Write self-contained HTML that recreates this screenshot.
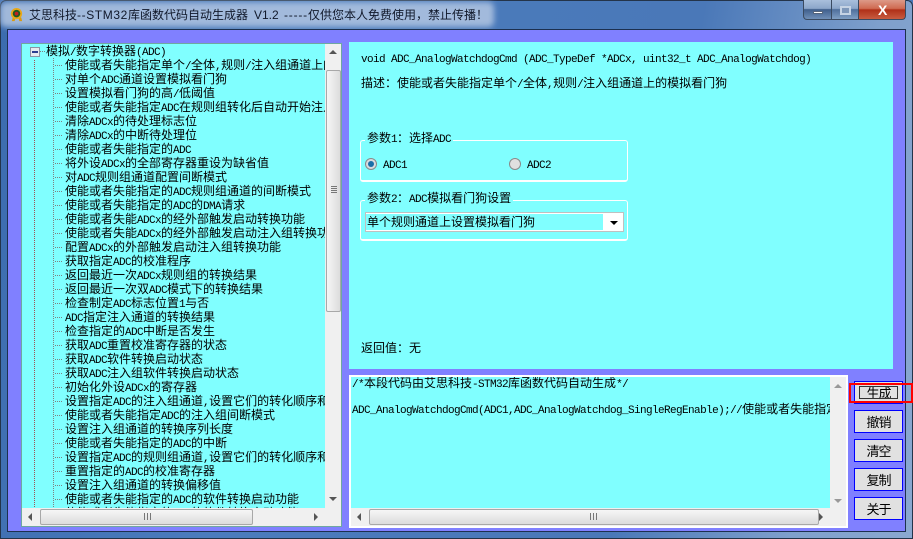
<!DOCTYPE html>
<html><head><meta charset="utf-8">
<style>
html,body{margin:0;padding:0;width:913px;height:539px;overflow:hidden;background:#4a78b8}
*{box-sizing:border-box}
div{position:absolute}
u{text-decoration:none;font-family:"Liberation Mono",monospace;font-size:11px;letter-spacing:-.6px}
body{font-family:"WenQuanYi Zen Hei","Noto Sans CJK SC",sans-serif;font-size:12px;color:#000;line-height:14px}
#frame{left:0;top:0;width:913px;height:539px;background:linear-gradient(100deg,#3c6cae 0%,#4b7cbd 30%,#4a78b8 70%,#7fa0cc 88%,#8aa8d0 100%);border:1px solid #24344a;border-radius:6px 6px 0 0}
#glow{left:0;top:2px;width:494px;height:25px;background:rgba(178,198,226,.85);filter:blur(3px);border-radius:6px}
.t{top:7px;font-size:12px;white-space:nowrap;color:#10182a;line-height:16px}
.tl{font-family:"Liberation Sans",sans-serif}
#client{left:7px;top:29px;width:899px;height:503px;background:#8080ff;border:1px solid #1c3050}
.row{left:43px;white-space:nowrap;height:14px;font-size:12px;line-height:14px}
#tree{left:21px;top:43px;width:321px;height:484px;background:#80ffff;border:1px solid #6fa8a0;overflow:hidden}
#treeclip{left:0;top:0;width:303px;height:464px;overflow:hidden}
.sb{background:#f0f0f0}
.thumb{background:linear-gradient(#f6f6f6,#dcdcdc);border:1px solid #a8a8a8;border-radius:2px}
.tv{background:linear-gradient(90deg,#f6f6f6,#dcdcdc);border:1px solid #a8a8a8;border-radius:2px}
.ar{width:0;height:0}
.btn{left:854px;width:49px;height:23px;background:#e1e1e1;border:1px solid #0000ff;text-align:center;font-size:13px;letter-spacing:-1px;line-height:21px}
.gb{border:1px solid #fff;border-bottom-width:2px;border-radius:3px}
.lg{background:#80ffff;padding:0 2px;white-space:nowrap;font-size:12px;line-height:14px}
</style></head><body>
<div id="frame"></div>
<div id="glow"></div>
<svg style="position:absolute;left:9px;top:7px" width="15" height="15" viewBox="0 0 16 16"><path d="M4 11l-1 4h3l1-3zM10 11l1 4h3l-1-4z" fill="#d99a10"/><circle cx="8" cy="7" r="6" fill="#e8a818"/><circle cx="8" cy="7" r="4" fill="#1f5a1f"/><circle cx="8" cy="7" r="2" fill="#c02020"/></svg>
<div class="t" style="left:29px">艾思科技</div>
<div class="t tl" style="left:77px;letter-spacing:.6px">--STM32</div>
<div class="t" style="left:128px">库函数代码自动生成器</div>
<div class="t tl" style="left:254px">V1.2</div>
<div class="t tl" style="left:284px;letter-spacing:.8px">-----</div>
<div class="t" style="left:308px">仅供您本人免费使用，禁止传播！</div>
<!-- window buttons -->
<div style="left:803px;top:0;width:29px;height:20px;background:linear-gradient(#a9bfdc 0%,#8ba6c9 45%,#3f5f8c 50%,#6f8fb8 100%);border:1px solid #3a4a60;border-top:0;border-radius:0 0 0 4px"></div>
<div style="left:813px;top:11px;width:10px;height:3px;background:#fff;border:1px solid #55657c"></div>
<div style="left:832px;top:0;width:26px;height:20px;background:linear-gradient(#a9bfdc 0%,#8ba6c9 45%,#4f6f9c 50%,#7f9fc4 100%);border-bottom:1px solid #3a4a60"></div>
<div style="left:840px;top:6px;width:11px;height:9px;border:2px solid #c5d3e4;background:#7e98ba"></div>
<div style="left:858px;top:0;width:48px;height:20px;background:linear-gradient(#dd9a88 0%,#cf6a50 45%,#b03018 52%,#c85c40 100%);border:1px solid #3a4a60;border-top:0;border-radius:0 0 4px 0"></div>
<div style="left:878px;top:3px;font:bold 14px/14px 'Liberation Sans',sans-serif;color:#fff">X</div>

<div id="client"></div>

<!-- tree -->
<div id="tree">
 <div id="treeclip">
  <svg style="position:absolute;left:0;top:0" width="60" height="464">
   <path d="M12.5 16V464" stroke="#a05050" stroke-width="1" stroke-dasharray="1 1" fill="none"/>
   <path d="M31.5 14V464" stroke="#808080" stroke-width="1" stroke-dasharray="1 1" fill="none"/>
   <path d="M18 7.5H24" stroke="#808080" stroke-width="1" stroke-dasharray="1 1"/>
   <rect x="8.5" y="3.5" width="9" height="9" fill="#e6eaf0" stroke="#8a94a4"/>
   <path d="M10 8H16" stroke="#2c3e90" stroke-width="2"/>
   <g stroke="#808080" stroke-dasharray="1 1">
   <path d="M33 21.5h8M33 35.5h8M33 49.5h8M33 63.5h8M33 77.5h8M33 91.5h8M33 105.5h8M33 119.5h8M33 133.5h8M33 147.5h8M33 161.5h8M33 175.5h8M33 189.5h8M33 203.5h8M33 217.5h8M33 231.5h8M33 245.5h8M33 259.5h8M33 273.5h8M33 287.5h8M33 301.5h8M33 315.5h8M33 329.5h8M33 343.5h8M33 357.5h8M33 371.5h8M33 385.5h8M33 399.5h8M33 413.5h8M33 427.5h8M33 441.5h8M33 455.5h8"/>
   </g>
  </svg>
  <div class="row" style="left:24px;top:0">模拟<u>/</u>数字转换器<u>(ADC)</u></div>
  <div class="row" style="top:14px">使能或者失能指定单个<u>/</u>全体<u>,</u>规则<u>/</u>注入组通道上的模拟看门狗</div>
  <div class="row" style="top:28px">对单个<u>ADC</u>通道设置模拟看门狗</div>
  <div class="row" style="top:42px">设置模拟看门狗的高<u>/</u>低阈值</div>
  <div class="row" style="top:56px">使能或者失能指定<u>ADC</u>在规则组转化后自动开始注入组转换</div>
  <div class="row" style="top:70px">清除<u>ADCx</u>的待处理标志位</div>
  <div class="row" style="top:84px">清除<u>ADCx</u>的中断待处理位</div>
  <div class="row" style="top:98px">使能或者失能指定的<u>ADC</u></div>
  <div class="row" style="top:112px">将外设<u>ADCx</u>的全部寄存器重设为缺省值</div>
  <div class="row" style="top:126px">对<u>ADC</u>规则组通道配置间断模式</div>
  <div class="row" style="top:140px">使能或者失能指定的<u>ADC</u>规则组通道的间断模式</div>
  <div class="row" style="top:154px">使能或者失能指定的<u>ADC</u>的<u>DMA</u>请求</div>
  <div class="row" style="top:168px">使能或者失能<u>ADCx</u>的经外部触发启动转换功能</div>
  <div class="row" style="top:182px">使能或者失能<u>ADCx</u>的经外部触发启动注入组转换功能</div>
  <div class="row" style="top:196px">配置<u>ADCx</u>的外部触发启动注入组转换功能</div>
  <div class="row" style="top:210px">获取指定<u>ADC</u>的校准程序</div>
  <div class="row" style="top:224px">返回最近一次<u>ADCx</u>规则组的转换结果</div>
  <div class="row" style="top:238px">返回最近一次双<u>ADC</u>模式下的转换结果</div>
  <div class="row" style="top:252px">检查制定<u>ADC</u>标志位置<u>1</u>与否</div>
  <div class="row" style="top:266px"><u>ADC</u>指定注入通道的转换结果</div>
  <div class="row" style="top:280px">检查指定的<u>ADC</u>中断是否发生</div>
  <div class="row" style="top:294px">获取<u>ADC</u>重置校准寄存器的状态</div>
  <div class="row" style="top:308px">获取<u>ADC</u>软件转换启动状态</div>
  <div class="row" style="top:322px">获取<u>ADC</u>注入组软件转换启动状态</div>
  <div class="row" style="top:336px">初始化外设<u>ADCx</u>的寄存器</div>
  <div class="row" style="top:350px">设置指定<u>ADC</u>的注入组通道<u>,</u>设置它们的转化顺序和采样时间</div>
  <div class="row" style="top:364px">使能或者失能指定<u>ADC</u>的注入组间断模式</div>
  <div class="row" style="top:378px">设置注入组通道的转换序列长度</div>
  <div class="row" style="top:392px">使能或者失能指定的<u>ADC</u>的中断</div>
  <div class="row" style="top:406px">设置指定<u>ADC</u>的规则组通道<u>,</u>设置它们的转化顺序和采样时间</div>
  <div class="row" style="top:420px">重置指定的<u>ADC</u>的校准寄存器</div>
  <div class="row" style="top:434px">设置注入组通道的转换偏移值</div>
  <div class="row" style="top:448px">使能或者失能指定的<u>ADC</u>的软件转换启动功能</div>
  <div class="row" style="top:462px">使能或者失能指定的<u>ADC</u>的软件转换启动功能</div>
 </div>
 <!-- vscroll -->
 <div class="sb" style="left:303px;top:0;width:17px;height:482px"></div>
 <div class="ar" style="left:307px;top:6px;border-left:4px solid transparent;border-right:4px solid transparent;border-bottom:4px solid #555"></div>
 <div class="tv" style="left:304px;top:26px;width:15px;height:242px"></div>
 <div style="left:309px;top:142px;width:6px;height:1px;background:#777;box-shadow:0 2px #777,0 4px #777,0 6px #777"></div>
 <div class="ar" style="left:307px;top:453px;border-left:4px solid transparent;border-right:4px solid transparent;border-top:4px solid #555"></div>
 <!-- hscroll -->
 <div class="sb" style="left:0;top:464px;width:320px;height:18px"></div>
 <div class="ar" style="left:6px;top:469px;border-top:4px solid transparent;border-bottom:4px solid transparent;border-right:4px solid #555"></div>
 <div class="thumb" style="left:18px;top:465px;width:213px;height:16px"></div>
 <div style="left:122px;top:469px;width:1px;height:7px;background:#777;box-shadow:3px 0 #777,6px 0 #777"></div>
 <div class="ar" style="left:292px;top:469px;border-top:4px solid transparent;border-bottom:4px solid transparent;border-left:4px solid #555"></div>
</div>

<!-- right upper panel -->
<div style="left:349px;top:42px;width:544px;height:327px;background:#80ffff"></div>
<div style="left:361px;top:51px;white-space:nowrap"><u>void ADC_AnalogWatchdogCmd (ADC_TypeDef *ADCx, uint32_t ADC_AnalogWatchdog)</u></div>
<div style="left:361px;top:76px;white-space:nowrap">描述：使能或者失能指定单个<u>/</u>全体<u>,</u>规则<u>/</u>注入组通道上的模拟看门狗</div>

<div class="gb" style="left:360px;top:140px;width:268px;height:42px"></div>
<div class="lg" style="left:365px;top:131px">参数<u>1</u>：选择<u>ADC</u></div>
<div style="left:365px;top:158px;width:12px;height:12px;border-radius:50%;background:#d8dce0;border:1px solid #8a8a8a"></div>
<div style="left:368px;top:161px;width:6px;height:6px;border-radius:50%;background:#1a6ea8"></div>
<div style="left:383px;top:157px"><u>ADC1</u></div>
<div style="left:509px;top:158px;width:12px;height:12px;border-radius:50%;background:#e0e0e0;border:1px solid #8a8a8a"></div>
<div style="left:527px;top:157px"><u>ADC2</u></div>

<div class="gb" style="left:360px;top:200px;width:268px;height:41px"></div>
<div class="lg" style="left:365px;top:191px">参数<u>2</u>：<u>ADC</u>模拟看门狗设置</div>
<div style="left:365px;top:212px;width:259px;height:20px;background:#fff;border:1px solid #c0c0c0"></div>
<div style="left:366px;top:214px;width:237px;height:16px;background:#80ffff;line-height:16px;padding-left:1px;white-space:nowrap">单个规则通道上设置模拟看门狗</div>
<div class="ar" style="left:610px;top:221px;border-left:4px solid transparent;border-right:4px solid transparent;border-top:4px solid #000"></div>

<div style="left:361px;top:341px;white-space:nowrap">返回值：无</div>

<!-- output -->
<div style="left:349px;top:375px;width:499px;height:153px;background:#f0f0f0;border:2px solid #fff"></div>
<div style="left:351px;top:377px;width:479px;height:131px;background:#80ffff;overflow:hidden">
 <div style="left:1px;top:-1px;white-space:nowrap"><u>/*</u>本段代码由艾思科技<u>-STM32</u>库函数代码自动生成<u>*/</u></div>
 <div style="left:1px;top:25px;white-space:nowrap"><u>ADC_AnalogWatchdogCmd(ADC1,ADC_AnalogWatchdog_SingleRegEnable);//</u>使能或者失能指定单个规则通道</div>
</div>
<div class="ar" style="left:834px;top:384px;border-left:4px solid transparent;border-right:4px solid transparent;border-bottom:4px solid #999"></div>
<div class="ar" style="left:834px;top:499px;border-left:4px solid transparent;border-right:4px solid transparent;border-top:4px solid #999"></div>
<div class="ar" style="left:357px;top:513px;border-top:4px solid transparent;border-bottom:4px solid transparent;border-right:4px solid #555"></div>
<div class="thumb" style="left:369px;top:509px;width:450px;height:16px"></div>
<div style="left:590px;top:513px;width:1px;height:7px;background:#777;box-shadow:3px 0 #777,6px 0 #777"></div>
<div class="ar" style="left:819px;top:513px;border-top:4px solid transparent;border-bottom:4px solid transparent;border-left:4px solid #555"></div>

<!-- buttons -->
<div class="btn" style="top:381px">生成</div>
<div style="left:859px;top:386px;width:39px;height:13px;border:1px solid #333"></div>
<div class="btn" style="top:410px">撤销</div>
<div class="btn" style="top:439px">清空</div>
<div class="btn" style="top:468px">复制</div>
<div class="btn" style="top:497px">关于</div>
<div style="left:849px;top:383px;width:64px;height:20px;border:2px solid #f00"></div>
</body></html>
